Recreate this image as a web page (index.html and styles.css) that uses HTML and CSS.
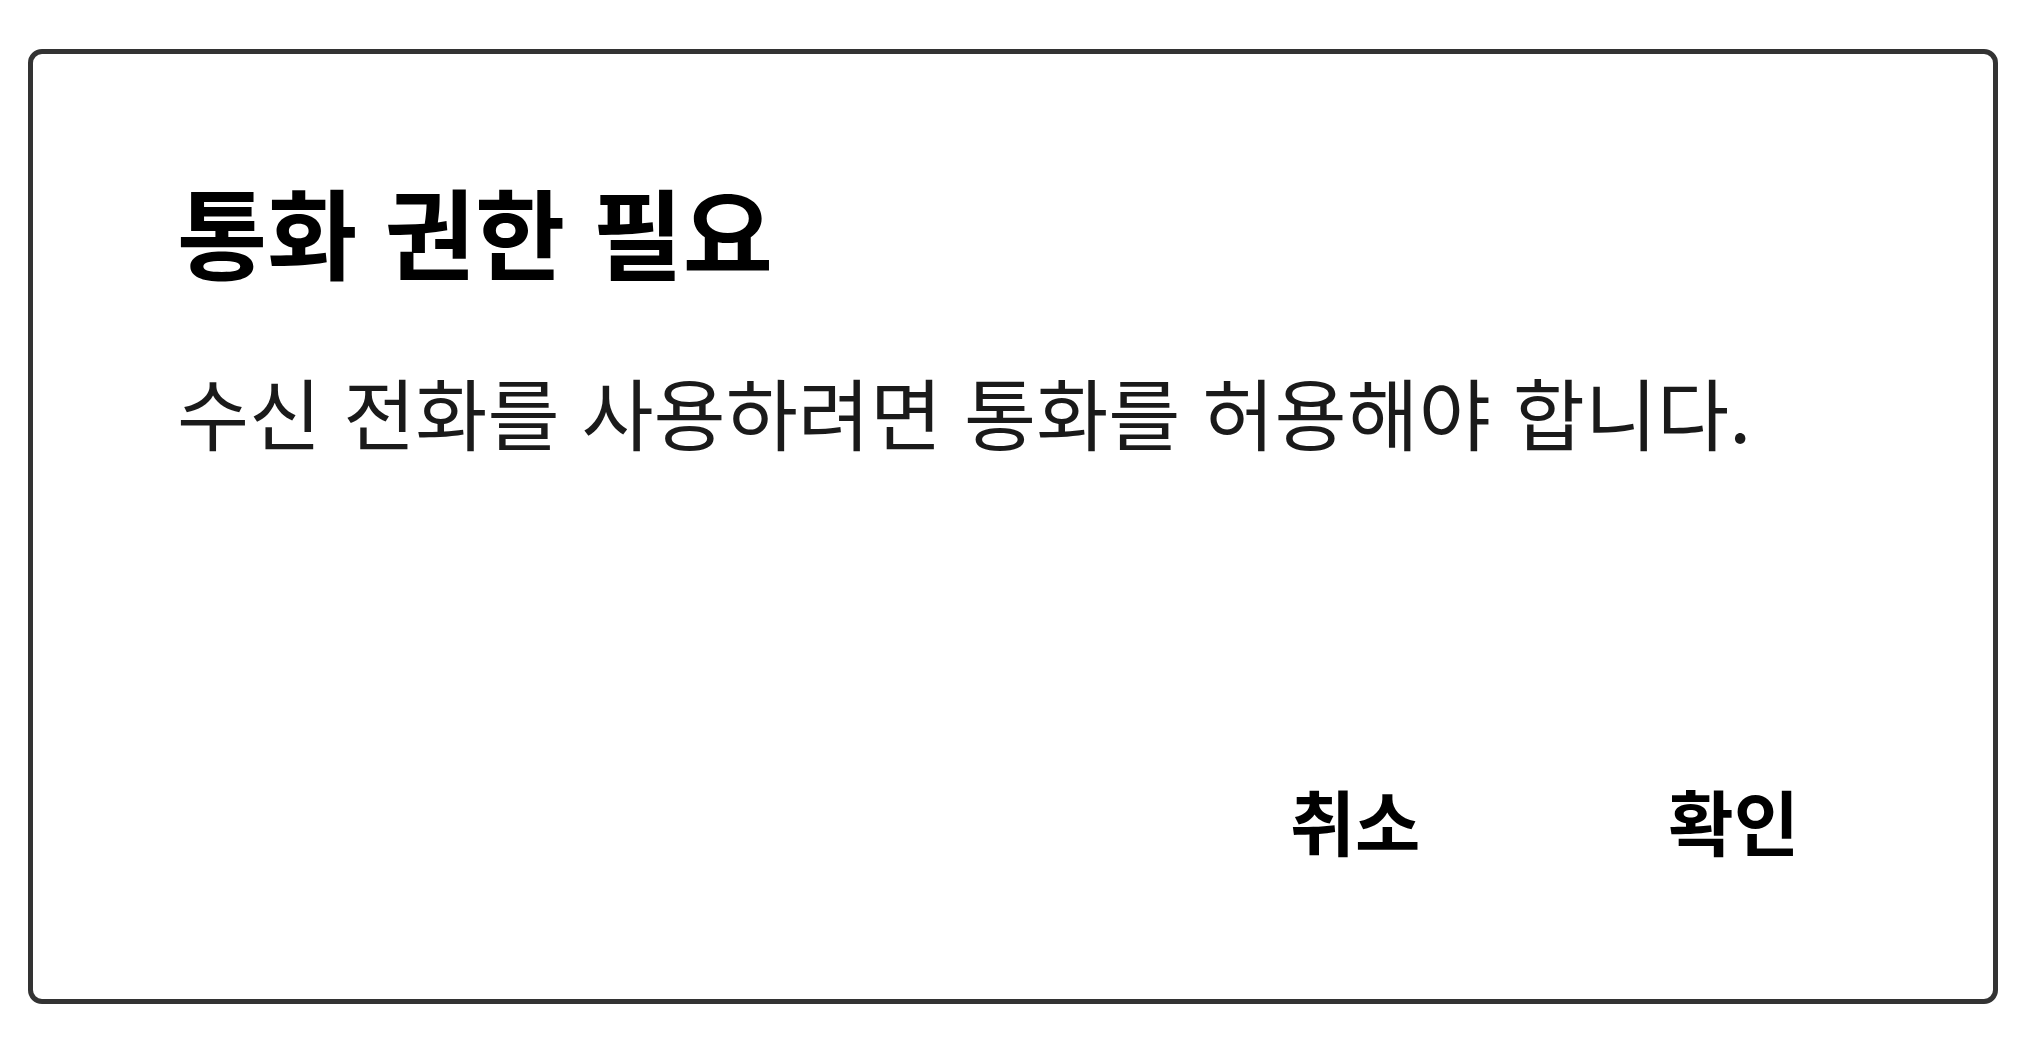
FILE: index.html
```html
<!DOCTYPE html>
<html lang="ko">
  <head>
    <meta charset="utf-8" />
    <title>통화 권한 필요</title>
    <meta name="viewport" content="width=device-width, initial-scale=1.0" />
    <link rel="stylesheet" href="styles.css">
  </head>
  <body>
    <div class="dialog">
      <h1 class="dialogTitle">통화 권한 필요</h1>
      <p class="dialogMessage">수신 전화를 사용하려면 통화를 허용해야 합니다.</p>
      <div class="dialogButtons">
        <button type="button" class="dialogButton">취소</button>
        <button type="button" class="dialogButton">확인</button>
      </div>
    </div>
  </body>
</html>
```

FILE: styles.css
```css
body {
  margin: 0;
  background: #ffffff;
  font-family: "Noto Sans CJK KR", "Noto Sans", sans-serif;
  color: #000000;
}
.dialog {
  box-sizing: border-box;
  width: 1970px;
  height: 955px;
  margin: 49px 0 0 28px;
  border: 5px solid #333333;
  border-radius: 14px;
  padding: 126px 194px 0 144px;
  display: flex;
  flex-direction: column;
}
.dialogTitle {
  margin: 0;
  font-size: 98px;
  line-height: 1;
  font-weight: 700;
}
.dialogMessage {
  margin: 94px 0 0 0;
  font-size: 78.4px;
  line-height: 1;
  font-weight: 400;
  color: #1a1a1a;
}
.dialogButtons {
  display: flex;
  justify-content: flex-end;
  gap: 248px;
  margin-top: 334px;
}
.dialogButton {
  background: none;
  border: none;
  padding: 0;
  font-family: inherit;
  font-size: 71px;
  line-height: 1;
  font-weight: 700;
  color: #000000;
}
```
